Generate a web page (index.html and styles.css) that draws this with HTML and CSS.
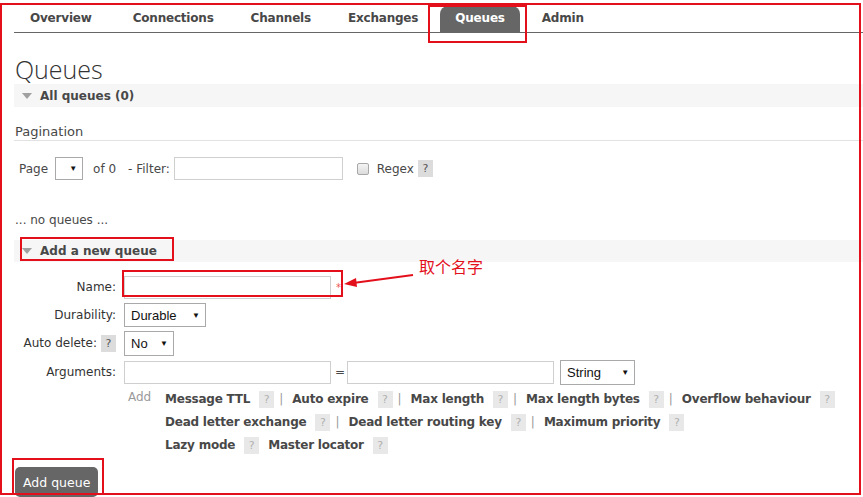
FILE: index.html
```html
<!DOCTYPE html>
<html>
<head>
<meta charset="utf-8">
<link rel="stylesheet" href="styles.css">
</head>
<body>
<nav class="tabs">
  <span class="tab tab-first">Overview</span>
  <span class="tab">Connections</span>
  <span class="tab">Channels</span>
  <span class="tab">Exchanges</span>
  <span class="tab active">Queues</span>
  <span class="tab">Admin</span>
</nav>
<main class="content">
  <h1 class="title">Queues</h1>
  <div class="band band-all"><span class="tri"></span>All queues (0)</div>
  <h3 class="pag">Pagination</h3>
  <div class="filter">
    <span>Page</span>
    <span class="sel sel-page"><span class="arrow">▼</span></span>
    <span class="of">of 0</span>
    <span class="flt">- Filter:</span>
    <input class="inp inp-filter" type="text">
    <span class="cb"></span>
    <span class="regex">Regex</span>
    <span class="help help-dark">?</span>
  </div>
  <p class="none">... no queues ...</p>
  <div class="band band-add"><span class="tri"></span>Add a new queue</div>
  <div class="form">
    <div class="lbl">Name:</div>
    <div class="ctl"><input class="inp inp-arg" type="text"><span class="req">*</span></div>
    <div class="lbl">Durability:</div>
    <div class="ctl"><span class="sel sel-dur">Durable<span class="arrow">▼</span></span></div>
    <div class="lbl">Auto delete: <span class="help help-dark">?</span></div>
    <div class="ctl"><span class="sel sel-no">No<span class="arrow">▼</span></span></div>
    <div class="lbl lbl-args">Arguments:</div>
    <div class="ctl ctl-args"><input class="inp inp-arg" type="text"><span class="eq">=</span><input class="inp inp-arg" type="text"><span class="sel sel-str">String<span class="arrow">▼</span></span></div>
    <div class="lbl"></div>
    <div class="ctl add-row">
      <span class="add">Add</span>
      <div class="links">
        <div class="line"><b>Message TTL</b><span class="help">?</span><span class="sep">|</span><b>Auto expire</b><span class="help">?</span><span class="sep">|</span><b>Max length</b><span class="help">?</span><span class="sep">|</span><b>Max length bytes</b><span class="help">?</span><span class="sep">|</span><b>Overflow behaviour</b><span class="help">?</span></div>
        <div class="line"><b>Dead letter exchange</b><span class="help">?</span><span class="sep">|</span><b>Dead letter routing key</b><span class="help">?</span><span class="sep">|</span><b>Maximum priority</b><span class="help">?</span></div>
        <div class="line"><b>Lazy mode</b><span class="help">?</span><b class="gap">Master locator</b><span class="help">?</span></div>
      </div>
    </div>
  </div>
  <button class="btn">Add queue</button>
</main>

<div class="mark frame"></div>
<div class="mark box-tab"></div>
<div class="mark box-add"></div>
<div class="mark box-name"></div>
<div class="mark box-btn"></div>
<svg class="arrow-note" width="80" height="20" viewBox="0 0 80 20">
  <line x1="70" y1="3" x2="10" y2="11" stroke="#e3101c" stroke-width="2"/>
  <polygon points="1,12 13,6 14,15" fill="#e3101c"/>
</svg>
<div class="note">取个名字</div>
</body>
</html>
```

FILE: styles.css
```css
* { box-sizing: border-box; }
html, body { margin: 0; background: #fff; }
body {
  font-family: "DejaVu Sans", Verdana, sans-serif;
  font-size: 12px;
  color: #484848;
  width: 863px;
  height: 497px;
  overflow: hidden;
  position: relative;
}

.tabs {
  display: flex;
  gap: 7px;
  margin-left: 14px;
  padding: 6px 0 0 1px;
  height: 33px;
  border-bottom: 1px solid #666;
}
.tab {
  padding: 0 15px;
  height: 26px;
  line-height: 25px;
  font-weight: bold;
  letter-spacing: -0.2px;
  color: #484848;
  border-radius: 8px 8px 0 0;
}
.tab-first { padding-right: 19px; }
.tab.active { background: #666; color: #fff; }

.content { padding-left: 14px; }

.title {
  margin: 22px 0 0 1px;
  font: 300 25px/29px "Open Sans", "DejaVu Sans", sans-serif;
  color: #333;
}

.band {
  display: flex;
  align-items: center;
  height: 23px;
  background: #f6f6f6;
  font-weight: bold;
  padding-left: 8px;
  color: #484848;
}
.band-add { height: 22px; margin-top: 12px; }
.tri {
  width: 0; height: 0;
  border-left: 5px solid transparent;
  border-right: 5px solid transparent;
  border-top: 6px solid #a0a0a0;
  margin-right: 8px;
}

.pag {
  margin: 17px 0 0;
  padding-left: 1px;
  font-size: 13px;
  line-height: 16px;
  font-weight: normal;
  color: #484848;
  border-bottom: 1px solid #e2e2e2;
}

.filter {
  display: flex;
  align-items: center;
  height: 23px;
  margin-top: 16px;
  padding-left: 5px;
}
.sel {
  display: flex;
  align-items: center;
  justify-content: space-between;
  border: 1px solid #a9a9a9;
  background: #fff;
  font-family: "Liberation Sans", Arial, sans-serif;
  font-size: 13px;
  color: #111;
  padding: 0 5px 0 6px;
}
.arrow { font-size: 8px; color: #111; }
.sel-page { width: 28px; height: 23px; margin-left: 7px; justify-content: flex-end; }
.of { margin-left: 10px; }
.flt { margin-left: 12px; }
.inp {
  height: 23px;
  border: 1px solid #cfcfcf;
  padding: 0 4px;
  outline: none;
  font: 13px "Liberation Sans", sans-serif;
}
.inp-filter { width: 169px; margin-left: 4px; }
.cb {
  width: 12px; height: 12px;
  margin-left: 14px;
  border: 1px solid #a8a8a8;
  border-radius: 2px;
  background: linear-gradient(#f4f4f4, #dcdcdc);
}
.regex { margin-left: 8px; }
.help {
  display: inline-flex;
  align-items: center;
  justify-content: center;
  width: 15px;
  height: 17px;
  background: #e8e8e8;
  color: #b0b0b0;
  font-size: 11px;
  font-weight: normal;
  letter-spacing: 0;
  vertical-align: middle;
  margin-left: 9px;
}
.help-dark { background: #dcdcdc; color: #555; margin-left: 4px; }

.none { margin: 32px 0 0 1px; line-height: 16px; }

.form {
  display: grid;
  grid-template-columns: 102px auto;
  column-gap: 8px;
  row-gap: 4px;
  margin-top: 13px;
  align-items: center;
}
.lbl { text-align: right; color: #333; display: flex; justify-content: flex-end; align-items: center; height: 24px; }
.ctl { display: flex; align-items: center; height: 24px; }
.lbl-args, .ctl-args { margin-top: 1px; }
.inp-arg { width: 207px; height: 23px; }
.req { color: #e55; font-size: 10px; margin-left: 5px; }
.sel-dur { width: 82px; height: 24px; }
.sel-no { width: 50px; height: 25px; }
.sel-str { width: 75px; height: 25px; margin-left: 6px; }
.eq { margin: 0 2px 0 4px; }

.add-row { grid-column: 2; height: auto; align-items: flex-start; margin-top: 0; }
.add { color: #9a9a9a; padding-left: 4px; width: 41px; line-height: 16px; margin-top: 1px; }
.links { line-height: 23px; }
.line { white-space: nowrap; height: 23px; }
.line b { color: #484848; letter-spacing: -0.22px; }
.sep { color: #999; margin: 0 9px 0 5px; }
.gap { margin-left: 9px; }

.btn {
  margin: 10px 0 0 1px;
  height: 30px;
  padding: 0 8px;
  background: #666;
  color: #fff;
  border: none;
  border-radius: 5px;
  font: 12.5px "DejaVu Sans", Verdana, sans-serif;
}

.mark { position: absolute; border: 2px solid #e3101c; }
.frame { left: 0; top: 3px; width: 861px; height: 492px; }
.box-tab { left: 428px; top: 5px; width: 99px; height: 38px; }
.box-add { left: 20px; top: 237px; width: 154px; height: 24px; }
.box-name { left: 122px; top: 270px; width: 221px; height: 27px; }
.box-btn { left: 12px; top: 458px; width: 92px; height: 37px; }
.arrow-note { position: absolute; left: 343px; top: 272px; }
.note {
  position: absolute;
  left: 419px;
  top: 254px;
  font: 16px "Noto Sans CJK SC", sans-serif;
  color: #e3101c;
}
```
